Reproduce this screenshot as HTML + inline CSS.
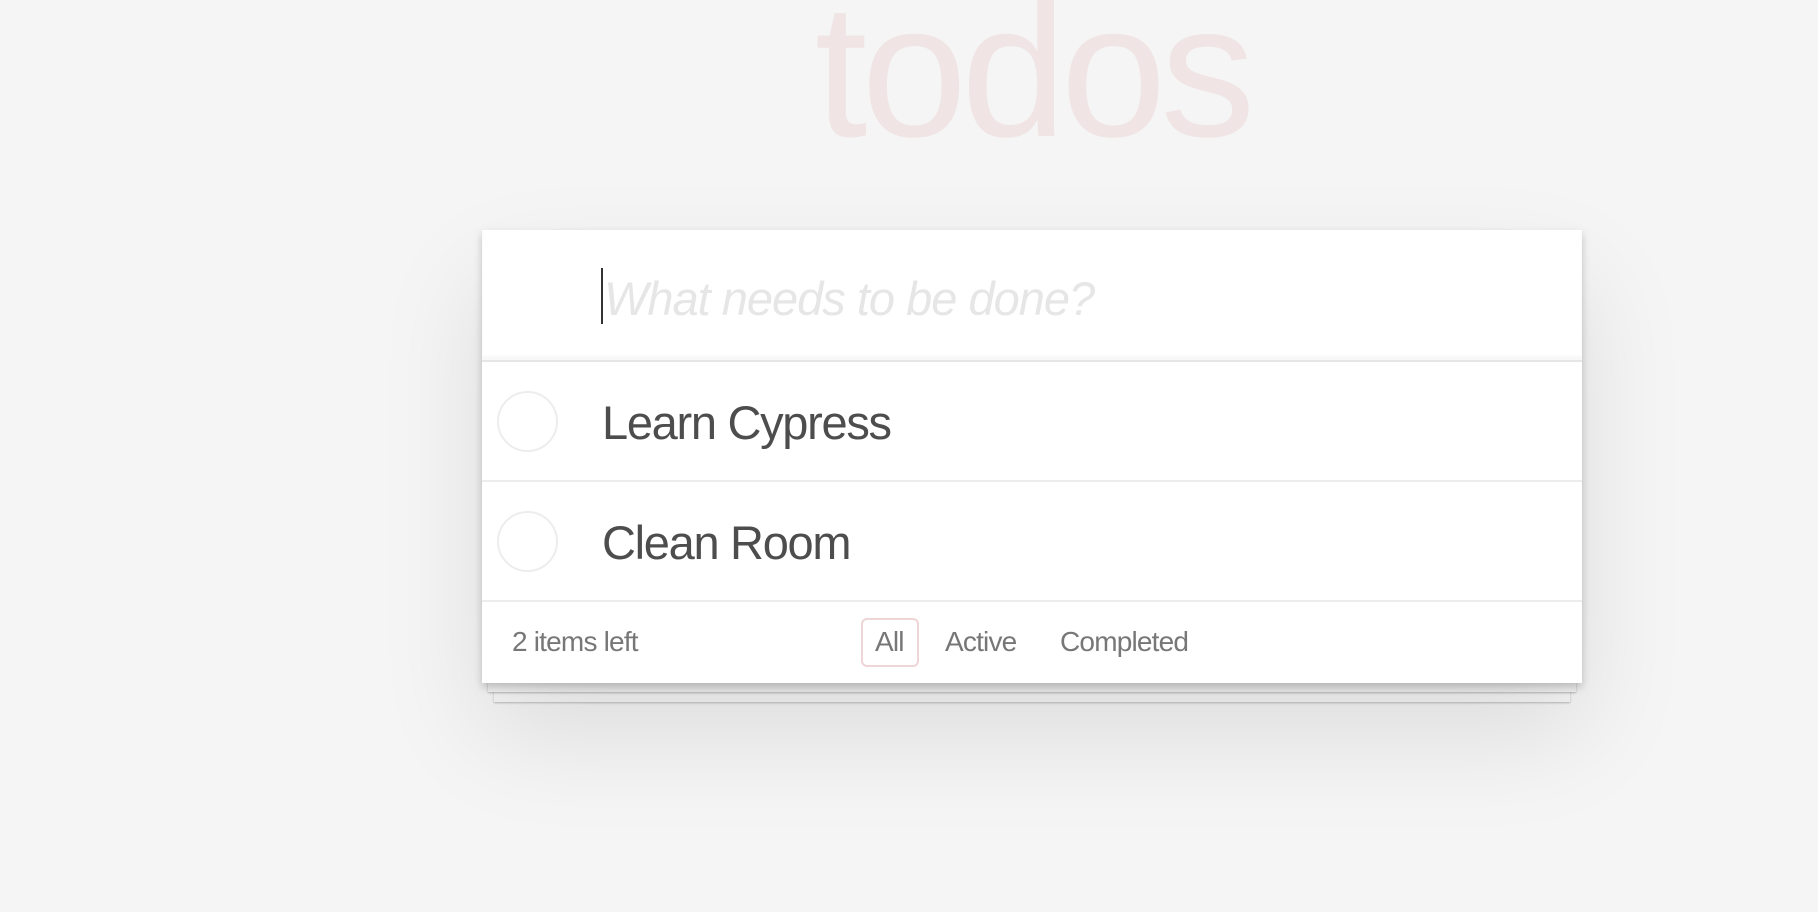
<!DOCTYPE html>
<html><head><style>
html,body{margin:0;padding:0;background:#f5f5f5;width:1818px;height:912px;overflow:hidden;font-family:"Liberation Sans",Helvetica,sans-serif;}
.title{position:absolute;left:0;width:2064px;top:-38px;text-align:center;font-size:190px;color:#f0e4e4;font-weight:100;letter-spacing:-6px;}
.stack1{position:absolute;left:488px;top:672px;width:1088px;height:20px;background:#f6f6f6;box-shadow:0 1px 2px rgba(0,0,0,.25);}
.stack2{position:absolute;left:494px;top:682px;width:1076px;height:20px;background:#f6f6f6;box-shadow:0 1px 2px rgba(0,0,0,.25);}
.card{position:absolute;left:482px;top:230px;width:1100px;height:453px;background:#fff;box-shadow:0 4px 8px rgba(0,0,0,.2),0 50px 100px rgba(0,0,0,.1);}
.hdr{position:absolute;left:0;top:0;width:1100px;height:130px;box-shadow:inset 0 -4px 2px rgba(0,0,0,.03);border-bottom:2px solid #e6e6e6;}
.ph{position:absolute;left:604px;top:271px;font-size:47px;font-style:italic;color:#e6e6e6;font-weight:300;letter-spacing:-1px;}
.caret{position:absolute;left:601px;top:268px;width:2px;height:56px;background:#333;}
.row{position:absolute;left:0;width:1100px;height:118px;border-bottom:2px solid #ededed;}
.circ{position:absolute;left:15px;top:29px;width:61px;height:61px;border:2px solid #ededed;border-radius:50%;box-sizing:border-box;}
.lbl{position:absolute;left:120px;top:33px;font-size:47px;color:#4d4d4d;letter-spacing:-1.3px;}
.ft{position:absolute;font-size:28px;color:#777;letter-spacing:-0.8px;}
.all{position:absolute;left:379px;top:388px;width:54px;height:45px;border:2px solid #efd5d5;border-radius:6px;}
</style></head><body>
<div class="title">todos</div>
<div class="stack2"></div><div class="stack1"></div>
<div class="card">
<div class="hdr"></div>
<div class="row" style="top:132px"><div class="circ"></div><div class="lbl">Learn Cypress</div></div>
<div class="row" style="top:252px"><div class="circ"></div><div class="lbl">Clean Room</div></div>
<div class="ft" style="left:30px;top:396px">2 items left</div>
<div class="all"></div>
<div class="ft" style="left:393px;top:396px">All</div>
<div class="ft" style="left:463px;top:396px">Active</div>
<div class="ft" style="left:578px;top:396px">Completed</div>
</div>
<div class="caret"></div>
<div class="ph">What needs to be done?</div>
</body></html>
